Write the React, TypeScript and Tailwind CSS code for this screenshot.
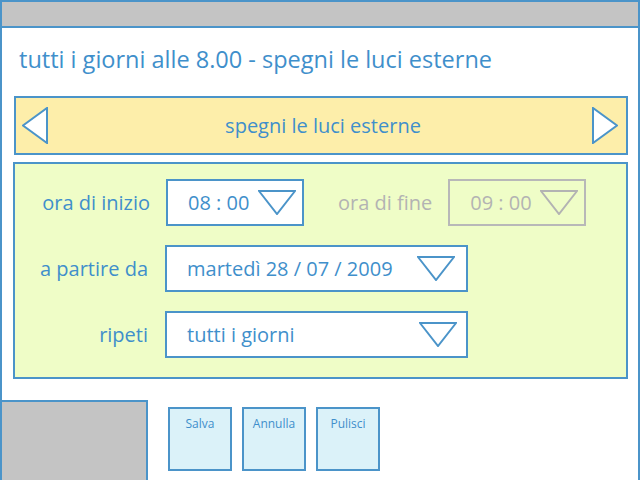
import React from "react";

const font = { fontFamily: '"Open Sans", "Noto Sans", sans-serif' };

function Down({ gray }: { gray?: boolean }) {
  return (
    <svg width="38" height="25" viewBox="0 0 38 25" className="shrink-0">
      <polygon
        points="1,1 37,1 19,24"
        fill="none"
        stroke={gray ? "#b3b3b3" : "#4b94c9"}
        strokeWidth="2"
        strokeLinejoin="miter"
      />
    </svg>
  );
}

function Side({ dir }: { dir: "l" | "r" }) {
  return (
    <svg width="26" height="37" viewBox="0 0 26 37" className="shrink-0">
      <polygon
        points={dir === "l" ? "25,1 25,36 1,18.5" : "1,1 1,36 25,18.5"}
        fill="#ffffff"
        stroke="#4b94c9"
        strokeWidth="2"
      />
    </svg>
  );
}

export default function App() {
  return (
    <div
      className="w-[640px] h-[480px] overflow-hidden bg-white border-2 border-b-0 border-[#4b94c9] flex flex-col"
      style={font}
    >
      <div className="h-[26px] shrink-0 bg-[#c4c4c4] border-b-2 border-[#4b94c9]" />
      <div className="h-[68px] shrink-0 flex items-center pl-[17px] pb-[4px] text-[23.5px] text-[#3f8fcb]">
        tutti i giorni alle 8.00 - spegni le luci esterne
      </div>
      <div className="ml-[12px] w-[614px] h-[59px] shrink-0 bg-[#fdeeaa] border-2 border-[#4b94c9] flex items-center justify-between pl-[6px] pr-[8px]">
        <Side dir="l" />
        <span className="ml-[6px] text-[20px] text-[#3f8fcb]">spegni le luci esterne</span>
        <Side dir="r" />
      </div>
      <div className="mt-[7px] ml-[11px] w-[615px] h-[217px] shrink-0 bg-[#effdc7] border-2 border-[#4b94c9] pt-[15px] flex flex-col gap-[19px] text-[20px]">
        <div className="flex items-center">
          <div className="w-[135px] text-right text-[#3f8fcb]">ora di inizio</div>
          <div className="ml-[16px] w-[138px] h-[47px] bg-white border-2 border-[#4b94c9] flex items-center justify-between pl-[20px] pr-[6px] text-[#3f8fcb]">
            <span>08 : 00</span>
            <Down />
          </div>
          <div className="ml-[34px] text-[#b3b3b3]">ora di fine</div>
          <div className="ml-[16px] w-[138px] h-[47px] border-2 border-[#b8b8b8] flex items-center justify-between pl-[20px] pr-[6px] text-[#b3b3b3]">
            <span>09 : 00</span>
            <Down gray />
          </div>
        </div>
        <div className="flex items-center">
          <div className="w-[133px] text-right text-[#3f8fcb]">a partire da</div>
          <div className="ml-[17px] w-[303px] h-[47px] bg-white border-2 border-[#4b94c9] flex items-center justify-between pl-[20px] pr-[11px] text-[#3f8fcb]">
            <span>martedì 28 / 07 / 2009</span>
            <Down />
          </div>
        </div>
        <div className="flex items-center">
          <div className="w-[133px] text-right text-[#3f8fcb]">ripeti</div>
          <div className="ml-[17px] w-[303px] h-[47px] bg-white border-2 border-[#4b94c9] flex items-center justify-between pl-[20px] pr-[9px] text-[#3f8fcb]">
            <span>tutti i giorni</span>
            <Down />
          </div>
        </div>
      </div>
      <div className="mt-[21px] flex items-start flex-1">
        <div className="w-[146px] h-[80px] bg-[#c4c4c4] border-t-2 border-r-2 border-[#4b94c9]" />
        <div className="ml-[20px] mt-[7px] flex gap-[10px]">
          {["Salva", "Annulla", "Pulisci"].map((t) => (
            <div
              key={t}
              className="w-[64px] h-[64px] bg-[#dbf2f9] border-2 border-[#4b94c9] flex justify-center pt-[6px] text-[12px] text-[#3f8fcb]"
            >
              {t}
            </div>
          ))}
        </div>
      </div>
    </div>
  );
}
